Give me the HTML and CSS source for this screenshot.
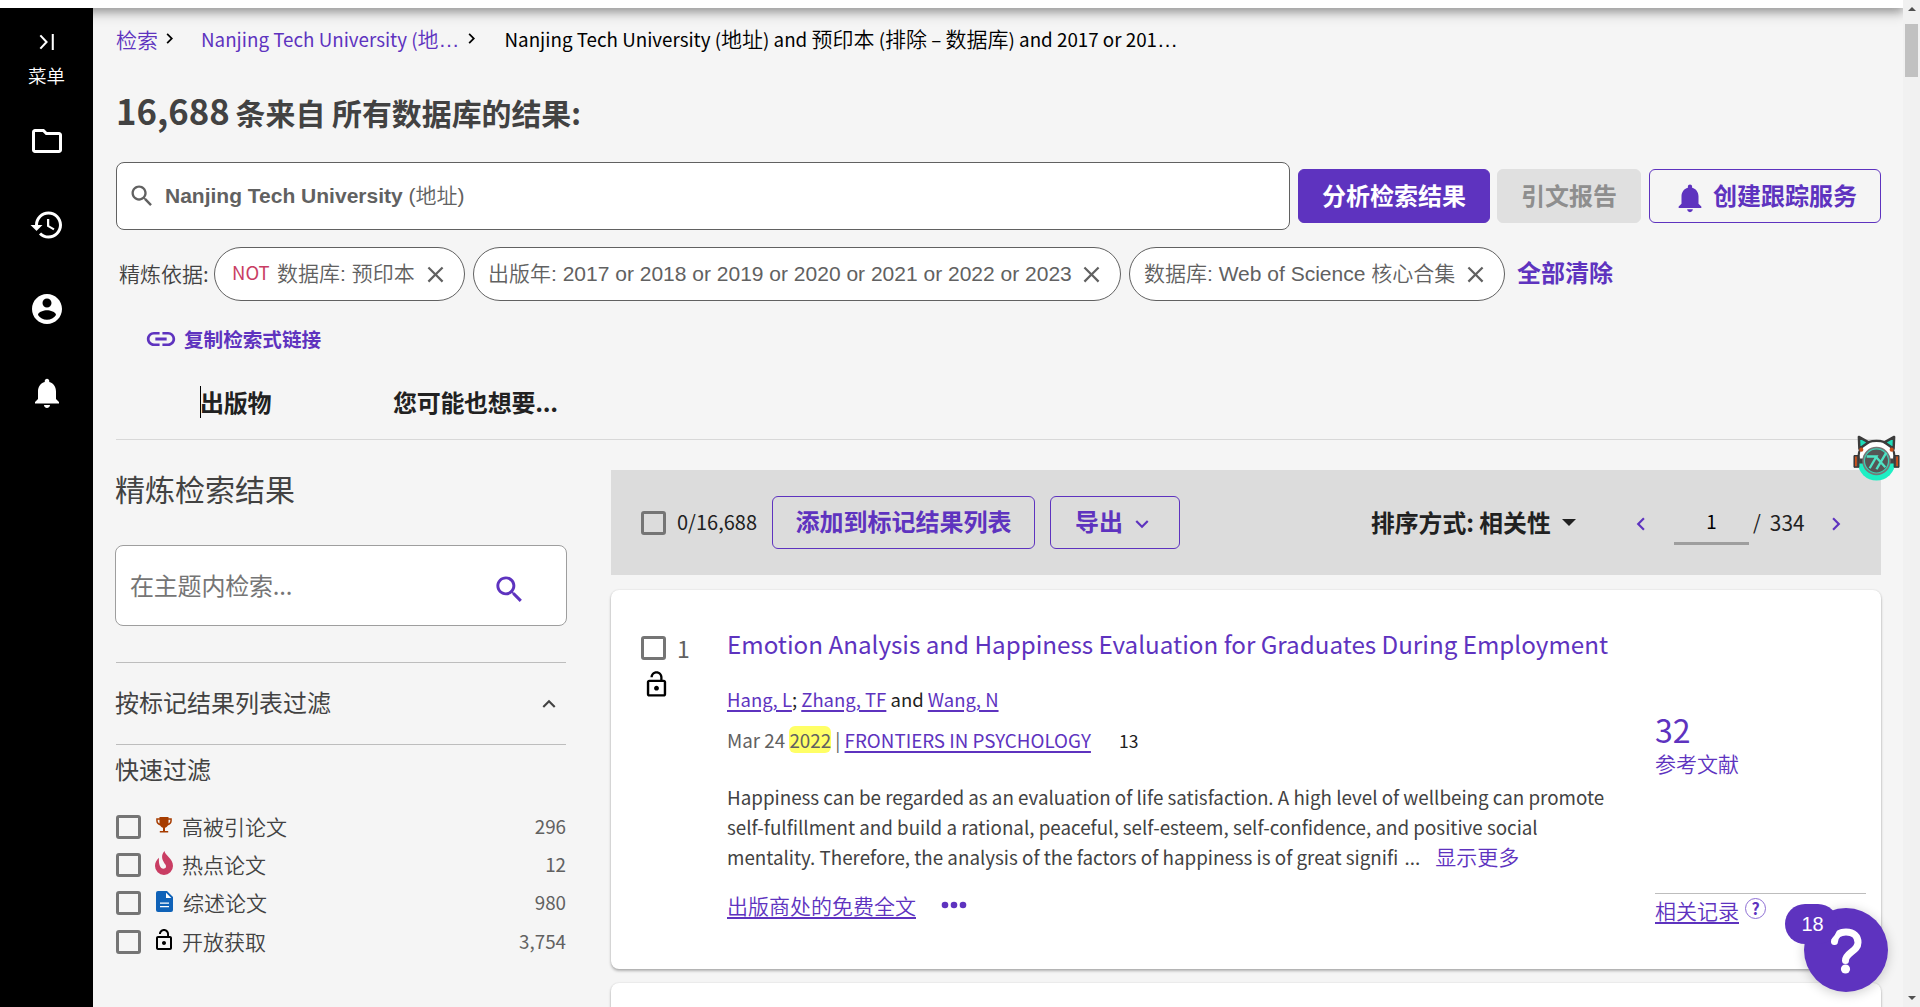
FILE: index.html
```html
<!DOCTYPE html>
<html lang="zh-CN">
<head>
<meta charset="utf-8">
<title>Web of Science</title>
<link rel="stylesheet" href="styles.css">
</head>
<body>
<svg width="0" height="0" class="defs">
  <symbol id="bell" viewBox="0 0 24 24"><path d="M12 22c1.1 0 2-.9 2-2h-4c0 1.1.89 2 2 2zm6-6v-5c0-3.07-1.64-5.64-4.5-6.32V4c0-.83-.67-1.5-1.5-1.5s-1.500.67-1.500 1.500v.68C7.630 5.360 6 7.920 6 11v5l-2 2v1h16v-1l-2-2z"/></symbol>
  <symbol id="search" viewBox="0 0 24 24"><path d="M15.500 14h-.79l-.28-.27C15.410 12.590 16 11.110 16 9.500 16 5.910 13.090 3 9.500 3S3 5.910 3 9.500 5.910 16 9.500 16c1.610 0 3.090-.59 4.230-1.570l.27.28v.79l5 4.990L20.490 19l-4.990-5zm-6 0C7.010 14 5 11.990 5 9.500S7.010 5 9.500 5 14 7.010 14 9.500 11.990 14 9.500 14z"/></symbol>
  <symbol id="close" viewBox="0 0 24 24"><path d="M19 6.410L17.590 5 12 10.590 6.410 5 5 6.410 10.590 12 5 17.590 6.410 19 12 13.410 17.590 19 19 17.590 13.410 12z"/></symbol>
  <symbol id="right" viewBox="0 0 24 24"><path d="M10 6L8.590 7.410 13.170 12l-4.580 4.590L10 18l6-6z"/></symbol>
  <symbol id="left" viewBox="0 0 24 24"><path d="M15.410 7.410L14 6l-6 6 6 6 1.410-1.410L10.830 12z"/></symbol>
  <symbol id="up" viewBox="0 0 24 24"><path d="M12 8l-6 6 1.410 1.410L12 10.830l4.590 4.580L18 14z"/></symbol>
  <symbol id="down" viewBox="0 0 24 24"><path d="M16.590 8.590L12 13.170 7.410 8.590 6 10l6 6 6-6z"/></symbol>
  <symbol id="unlock" viewBox="0 0 24 24"><path d="M12 17c1.100 0 2-.9 2-2s-.9-2-2-2-2 .9-2 2 .9 2 2 2zm6-9h-1V6c0-2.760-2.240-5-5-5S7 3.240 7 6h1.900c0-1.710 1.390-3.100 3.100-3.100s3.100 1.390 3.100 3.100v2H6c-1.100 0-2 .9-2 2v10c0 1.100.9 2 2 2h12c1.100 0 2-.9 2-2V10c0-1.100-.9-2-2-2zm0 12H6V10h12v10z"/></symbol>
</svg>
<div class="app">
  <div class="topbar"></div>
  <nav class="rail">
    <svg class="expand" viewBox="0 0 18 18"><path d="M1.500 1.500l7 7.500-7 7.500M15.500 0v18" fill="none" stroke="#fff" stroke-width="2.300"/></svg>
    <span class="rail-label">菜单</span>
    <svg class="r1" viewBox="0 0 24 24"><path d="M9.170 6l2 2H20v10H4V6h5.170M10 4H4c-1.100 0-1.990.9-1.990 2L2 18c0 1.100.9 2 2 2h16c1.100 0 2-.9 2-2V8c0-1.100-.9-2-2-2h-8l-2-2z"/></svg>
    <svg class="r2" viewBox="0 0 24 24"><path d="M13 3c-4.970 0-9 4.030-9 9H1l3.890 3.890.07.14L9 12H6c0-3.870 3.130-7 7-7s7 3.130 7 7-3.130 7-7 7c-1.930 0-3.680-.79-4.940-2.060l-1.420 1.420C8.270 19.990 10.510 21 13 21c4.970 0 9-4.030 9-9s-4.030-9-9-9zm-1 5v5l4.280 2.540.72-1.210-3.500-2.080V8H12z"/></svg>
    <svg class="r3" viewBox="0 0 24 24"><path d="M12 2C6.480 2 2 6.480 2 12s4.480 10 10 10 10-4.480 10-10S17.520 2 12 2zm0 3c1.660 0 3 1.340 3 3s-1.340 3-3 3-3-1.340-3-3 1.340-3 3-3zm0 14.200c-2.500 0-4.710-1.280-6-3.220.03-1.990 4-3.080 6-3.080 1.990 0 5.970 1.090 6 3.080-1.290 1.940-3.500 3.220-6 3.220z"/></svg>
    <svg class="r4"><use href="#bell"/></svg>
  </nav>
  <main class="main">
    <div class="crumbs">
      <a class="c1 zh">检索</a><svg class="sep"><use href="#right"/></svg>
      <a class="c2">Nanjing Tech University (<span class="zh">地</span><span class="more">…</span></a><svg class="sep"><use href="#right"/></svg>
      <span class="c3">Nanjing Tech University (<span class="zh">地址</span>) and <span class="zh">预印本</span> (<span class="zh">排除</span> – <span class="zh">数据库</span>) and 2017 or 201<span class="more">…</span></span>
    </div>
    <h1 class="total"><span class="num">16,688</span><span class="total-text">条来自 所有数据库的结果:</span></h1>
    <div class="searchrow">
      <div class="query"><svg><use href="#search"/></svg><span><b>Nanjing Tech University</b> (地址)</span></div>
      <button class="btn solid">分析检索结果</button>
      <button class="btn disabled">引文报告</button>
      <button class="btn alert"><svg><use href="#bell"/></svg>创建跟踪服务</button>
    </div>
    <div class="refine">
      <span class="refine-label">精炼依据:</span>
      <span class="chip chip1"><em>NOT</em>数据库: 预印本<svg><use href="#close"/></svg></span>
      <span class="chip chip2">出版年: 2017 or 2018 or 2019 or 2020 or 2021 or 2022 or 2023<svg><use href="#close"/></svg></span>
      <span class="chip chip3">数据库: Web of Science 核心合集<svg><use href="#close"/></svg></span>
      <a class="clear">全部清除</a>
    </div>
    <div class="copy"><svg viewBox="0 0 24 24"><path d="M3.900 12c0-1.710 1.390-3.100 3.100-3.100h4V7H7c-2.760 0-5 2.240-5 5s2.240 5 5 5h4v-1.900H7c-1.710 0-3.100-1.390-3.100-3.100zM8 13h8v-2H8v2zm9-6h-4v1.900h4c1.710 0 3.100 1.390 3.100 3.100s-1.390 3.100-3.100 3.100h-4V17h4c2.760 0 5-2.240 5-5s-2.240-5-5-5z"/></svg><span>复制检索式链接</span></div>
    <div class="tabs"><span class="tab1">出版物</span><span class="tab2">您可能也想要...</span></div>
    <div class="columns">
      <aside class="side">
        <h2>精炼检索结果</h2>
        <div class="topic"><span>在主题内检索...</span><svg><use href="#search"/></svg></div>
        <div class="section"><span>按标记结果列表过滤</span><svg><use href="#up"/></svg></div>
        <h3>快速过滤</h3>
        <div class="filter"><i class="box"></i><svg class="trophy" viewBox="0 0 18 18"><path d="M4.500 1h9v1.200h3.300v2.600c0 2.500-1.600 4.200-3.900 4.600-.8 1.300-1.700 2-2.900 2.300v3.200h3.200v1.600H4.800v-1.600H8v-3.200c-1.200-.3-2.100-1-2.900-2.300C2.800 9 1.200 7.300 1.200 4.800V2.200h3.300zM2.700 3.700v1c0 1.200.6 2.200 1.800 2.800V3.700zm10.800 0v3.800c1.200-.6 1.800-1.600 1.800-2.800v-1z"/></svg><span>高被引论文</span><b>296</b></div>
        <div class="filter"><i class="box"></i><svg class="flame" viewBox="0 0 18 24"><path d="M9.500 0c.2 4.500 8.500 7 8.500 15a9 9 0 0 1-18 0c0-3.500 1.500-6 4-8.300-.3 3.300 0 6 .8 8 .8 2 2 3 3.700 3 2.300 0 3.200-2 1.900-4.200C8.500 11 4.500 5.500 9.500 0z"/></svg><span>热点论文</span><b>12</b></div>
        <div class="filter"><i class="box"></i><svg class="doc" viewBox="0 0 17 21"><path fill="#0f62b8" d="M2 0h9l6 6v13a2 2 0 0 1-2 2H2a2 2 0 0 1-2-2V2a2 2 0 0 1 2-2z"/><path fill="#fff" d="M10 1.700V7h5.300zM4 11.500h9v1.300H4zm0 3.500h9v1.300H4z"/></svg><span>综述论文</span><b>980</b></div>
        <div class="filter"><i class="box"></i><svg class="open"><use href="#unlock"/></svg><span>开放获取</span><b>3,754</b></div>
      </aside>
      <section class="results">
        <div class="toolbar">
          <i class="box"></i><span class="count">0/16,688</span>
          <button class="btn add">添加到标记结果列表</button>
          <button class="btn export">导出<svg><use href="#down"/></svg></button>
          <span class="sort">排序方式: 相关性</span><i class="caret"></i>
          <svg class="prev"><use href="#left"/></svg>
          <span class="page">1</span><span class="slash">/</span><span class="pages">334</span>
          <svg class="next"><use href="#right"/></svg>
        </div>
        <article class="card">
          <div class="pick">
            <div class="pickrow"><i class="box"></i><span>1</span></div>
            <svg><use href="#unlock"/></svg>
          </div>
          <div class="record">
            <a class="title">Emotion Analysis and Happiness Evaluation for Graduates During Employment</a>
            <div class="authors"><a>Hang, L</a>; <a>Zhang, TF</a> and <a>Wang, N</a></div>
            <div class="source">Mar 24 <mark>2022</mark> | <a>FRONTIERS IN PSYCHOLOGY</a><span class="issue">13</span></div>
            <p class="abstract">Happiness can be regarded as an evaluation of life satisfaction. A high level of wellbeing can promote<br>self-fulfillment and build a rational, peaceful, self-esteem, self-confidence, and positive social<br>mentality. Therefore, the analysis of the factors of happiness is of great signifi <span class="dots">...</span><a>显示更多</a></p>
            <div class="links"><a>出版商处的免费全文</a><svg viewBox="0 0 26 8"><circle cx="4" cy="4" r="3.300"/><circle cx="13" cy="4" r="3.300"/><circle cx="22" cy="4" r="3.300"/></svg></div>
          </div>
          <div class="stats">
            <span class="refs">32</span>
            <a class="refs-label">参考文献</a>
            <div class="related"><a>相关记录</a><span class="hint">?</span></div>
          </div>
        </article>
        <article class="card next-card"></article>
      </section>
    </div>
  </main>
  <div class="scrollbar"><i class="arrow-up"></i><i class="thumb"></i><i class="arrow-down"></i></div>
</div>
<svg class="cat" viewBox="0 0 48 48">
  <ellipse cx="24" cy="29" rx="19" ry="18.500" fill="#1eefc4"/>
  <path d="M6 27C4 14 12 7 24 7s20 7 18 20z" fill="#fff" stroke="#3c3c3c" stroke-width="2.200"/>
  <path d="M6.500 15L6 3 16 8.500zM41.500 15L42 3 32 8.500z" fill="#1edcb8" stroke="#3c3c3c" stroke-width="2.500" stroke-linejoin="round"/>
  <path d="M1 22h5v12H1zM42 22h5v12h-5z" fill="#444" stroke="#333" stroke-width="1"/>
  <path d="M3 23v10M45 23v10" stroke="#d4521c" stroke-width="1.800"/>
  <circle cx="8.500" cy="16" r="2.100" fill="#c84c18"/><circle cx="39.500" cy="16" r="2.100" fill="#c84c18"/>
  <path d="M6 25h5v5H6zM37 25h5v5h-5z" fill="#444"/>
  <circle cx="24" cy="27.500" r="14.500" fill="#777"/>
  <circle cx="24" cy="27.500" r="12.300" fill="#555" stroke="#3ecfb3" stroke-width="1.200"/>
  <path d="M14 23h10L17 35M24 24l9 10M34 19L24 36" fill="none" stroke="#4fe3c5" stroke-width="2.400"/>
</svg>
<div class="help">
  <svg viewBox="0 0 84 84"><path d="M30.500 33.500C31 27 35.500 24 42 24c8 0 12 4.500 12 10.500 0 9-12.500 10-12.500 18" fill="none" stroke="#fff" stroke-width="7" stroke-linecap="round"/><circle cx="41.500" cy="61" r="4.600" fill="#fff"/></svg>
  <span class="badge">18</span>
</div>
</body>
</html>
```
FILE: styles.css
```css
* { box-sizing: border-box; }
html, body { margin: 0; height: 1007px; overflow: hidden; }
body {
  background: #f5f5f5;
  color: #424242;
  font-family: "Noto Sans CJK SC", sans-serif;
  font-size: 20px;
  line-height: 30px;
}
h1, h2, h3, p { margin: 0; }
a, span { white-space: nowrap; }
a { color: #5e33bf; }
em, i { font-style: normal; }
svg { flex: none; fill: currentColor; display: block; }
.defs { position: absolute; }
button { font-family: inherit; margin: 0; }

.app {
  display: grid;
  grid-template-rows: 8px 999px;
  grid-template-columns: 93px 1fr 17px;
}
.topbar {
  grid-column: 1 / 3;
  background: #fff;
  box-shadow: 0 3px 14px 2px rgba(0,0,0,.22), 0 2px 10px rgba(0,0,0,.35);
  clip-path: inset(0 0 -40px 0);
  position: relative;
}
.rail {
  grid-row: 2; grid-column: 1;
  background: #000; color: #fff;
  position: relative;
  display: flex; flex-direction: column; align-items: center;
}
.expand { width: 18px; height: 16px; margin-top: 26px; }
.rail-label { font-size: 18.500px; line-height: 30px; margin-top: 10px; font-weight: 350; }
.r1, .r2, .r3, .r4 { width: 36px; height: 36px; }
.r1 { margin-top: 33px; }
.r2, .r3, .r4 { margin-top: 48px; }

.main { grid-row: 2; grid-column: 2; padding: 0 22px 0 23px; min-width: 0; overflow: hidden; }
.crumbs { height: 61px; display: flex; align-items: center; color: #000; font-size: 18.800px; }
.zh { font-size: 21px; font-weight: 350; }
.more { font-family: "Liberation Sans", sans-serif; font-size: 21px; }
.sep { width: 21px; height: 21px; margin-left: 1px; }
.c2 { margin-left: 21px; }
.c3 { margin-left: 23px; }

.total { height: 66px; margin-top: 9px; display: flex; align-items: center; font-size: 29.900px; }
.num { font-size: 34.700px; margin-right: 6px; margin-top: -2px; }
.total-text { padding-top: 1px; }

.searchrow { height: 68px; margin-top: 18px; display: flex; align-items: center; }
.query {
  width: 1174px; height: 68px; margin-right: 8px; padding-left: 11px;
  background: #fff; border: 1px solid #616161; border-radius: 8px;
  display: flex; align-items: center;
  font-family: "Liberation Sans", "Noto Sans CJK SC", sans-serif; font-size: 21px; font-weight: 350; color: #616161;
}
.query svg { width: 28px; height: 28px; margin-right: 9px; }
.btn {
  font-weight: 700; font-size: 24px; line-height: 30px; color: #5e33bf;
  border: 1px solid #5e33bf; border-radius: 6px; background: none; padding: 0 0 2px;
  height: 54px; display: flex; align-items: center; justify-content: center;
}
.solid { width: 192px; background: #5e33bf; color: #fff; }
.disabled { width: 144px; margin: 0 8px 0 7px; background: #e0e0e0; border-color: #e0e0e0; color: #8e8e8e; }
.alert { width: 232px; }
.alert svg { width: 34px; height: 34px; margin: 6px 6px 0 0; }

.refine { display: flex; align-items: center; height: 54px; margin-top: 17px; font-size: 21px; color: #616161; }
.refine-label { width: 98px; padding: 0 0 2px 3px; color: #424242; font-weight: 350; }
.chip {
  height: 54px; border: 1px solid #616161; border-radius: 27px; background: #fff;
  display: flex; align-items: center; justify-content: space-between;
  padding: 0 15px 0 14px; margin-right: 8px;
  font-family: "Liberation Sans", "Noto Sans CJK SC", sans-serif; font-weight: 350;
}
.chip svg { width: 27px; height: 27px; }
.chip em { color: #c93d63; font-size: 18.500px; font-weight: 400; font-family: "Noto Sans CJK SC", sans-serif; padding-bottom: 4px; }
.chip1 { width: 251px; padding-left: 17px; }
.chip2 { width: 648px; }
.chip3 { width: 376px; margin-right: 12px; }
.clear { font-size: 24px; font-weight: 700; padding-bottom: 4px; }

.copy { display: flex; align-items: center; height: 40px; margin: 18px 0 0 28px; color: #5e33bf; font-weight: 700; font-size: 19.600px; }
.copy svg { width: 34px; height: 34px; margin-right: 6px; }
.copy span { padding-bottom: 1px; }

.tabs { height: 81px; border-bottom: 1px solid #d8d8d8; display: flex; align-items: flex-start; font-size: 24px; font-weight: 700; color: #212121; padding: 27px 0 0 84px; }
.tabs span { line-height: 32px; letter-spacing: -.3px; }
.tab1 { width: 193px; border-left: 1px solid #000; text-indent: -1px; }

.columns { display: flex; justify-content: space-between; }
.side { width: 452px; margin-left: -1px; padding-top: 28px; }
.side h2 { font-size: 30px; line-height: 40px; font-weight: 400; }
.topic {
  height: 81px; margin-top: 37px; padding: 0 39px 0 14px; border: 1px solid #9e9e9e; border-radius: 8px; background: #fff;
  display: flex; align-items: center; justify-content: space-between; font-size: 24px; color: #757575;
}
.topic span { padding-bottom: 2px; letter-spacing: -.2px; }
.topic svg { width: 35px; height: 35px; color: #5e33bf; margin-top: 7px; }
.section {
  margin: 36px 1px 0 1px; height: 83px; border: 1px solid #bdbdbd; border-width: 1px 0;
  display: flex; align-items: center; justify-content: space-between; padding-right: 4px; font-size: 24px;
}
.section span { padding-bottom: 3px; margin-left: -1px; }
.section svg { width: 26px; height: 26px; }
.side h3 { font-size: 24px; line-height: 48px; font-weight: 400; margin: 0 0 15px; }
.filter { display: flex; align-items: center; height: 38.200px; margin: 0 1px; font-size: 21px; font-weight: 350; }
.filter svg { margin-right: 9px; margin-bottom: 4px; }
.filter span, .filter b { padding-bottom: 2px; }
.filter b { margin-left: auto; font-weight: 400; font-size: 18.800px; color: #616161; }
.box { flex: none; width: 25px; height: 24px; border: 3px solid #757575; border-radius: 3px; }
.trophy { width: 18px; height: 18px; color: #a63c00; margin-left: 14px; }
.flame { width: 18px; height: 24px; color: #c93d63; margin-left: 14px; }
.doc { width: 17px; height: 21px; margin-left: 15px; }
.filter .doc { margin-right: 10px; }
.open { width: 24px; height: 24px; color: #000; margin-left: 11px; }
.filter .open { margin-right: 6px; }

.results { width: 1270px; padding-top: 30px; }
.toolbar { height: 105px; background: #dcdcdc; display: flex; align-items: center; padding-left: 30px; color: #212121; }
.toolbar > span { padding-bottom: 2px; }
.toolbar .btn { height: 53px; padding-bottom: 3px; }
.count { width: 94px; padding-left: 11px; margin-right: 12px; }
.add { width: 263px; margin-right: 15px; }
.export { width: 130px; }
.export svg { width: 26px; height: 26px; margin: 6px 0 0 6px; }
.sort { margin-left: 191px; font-size: 23.800px; font-weight: 700; width: 191px; }
.caret { border: 7px solid transparent; border-top-color: #212121; border-bottom: 0; }
.prev, .next { width: 26px; height: 26px; color: #5e33bf; margin-top: 2px; }
.prev { margin-left: 52px; margin-right: 20px; }
.page { width: 75px; height: 44px; margin-top: 1px; text-align: center; color: #000; border-bottom: 3px solid #9e9e9e; line-height: 40px; font-size: 18.800px; }
.slash { margin: 0 9px 0 4px; }
.pages { width: 53px; font-size: 20.800px; }

.card { height: 379px; margin-top: 15px; background: #fff; border-radius: 8px; box-shadow: 0 2px 3px rgba(0,0,0,.28), 0 0 2px rgba(0,0,0,.12); display: flex; padding-left: 30px; }
.next-card { margin-top: 14px; }
.pick { width: 87px; padding-top: 45px; }
.pickrow { display: flex; align-items: center; gap: 11px; height: 26px; font-size: 23px; color: #616161; }
.pick svg { width: 29px; height: 29px; color: #000; margin: 9px 0 0 1px; }
.record { width: 927px; font-size: 18.800px; }
.title { display: block; font-size: 24.200px; line-height: 36px; margin-top: 36px; margin-left: -1px; }
.authors { margin-top: 22px; color: #212121; font-size: 18.500px; margin-left: -1px; }
.authors a, .source a, .links a, .related a { text-decoration: underline; text-underline-offset: 3px; text-decoration-thickness: 2px; }
.source { margin-top: 11px; color: #616161; margin-left: -1px; }
.source mark { background: #ffff66; color: inherit; border-radius: 6px; }
.issue { color: #212121; margin-left: 28px; font-size: 17.500px; }
.abstract { margin-top: 26px; margin-left: -1px; white-space: nowrap; }
.dots { margin: 0 15px 0 2px; }
.abstract a { font-size: 21px; font-weight: 350; line-height: 20px; }
.links { display: flex; align-items: center; margin-top: 18px; margin-left: -1px; font-size: 21px; font-weight: 350; }
.links svg { width: 26px; height: 8px; margin-left: 25px; color: #5e33bf; }
.stats { width: 211px; padding-top: 119px; }
.refs, .refs-label { display: block; color: #5e33bf; }
.refs { font-size: 32px; line-height: 40px; }
.refs-label { font-size: 21px; font-weight: 350; line-height: 28px; }
.related { margin-top: 116px; border-top: 1px solid #bdbdbd; display: flex; align-items: center; height: 32px; font-size: 21px; font-weight: 350; }
.hint { width: 21px; height: 21px; border: 1px solid #8e6fd4; border-radius: 50%; margin: -3px 0 0 6px; color: #5e33bf; font-size: 16px; font-weight: 700; line-height: 18px; text-align: center; }

.scrollbar { grid-row: 1 / 3; grid-column: 3; background: #f1f1f1; display: flex; flex-direction: column; align-items: center; }
.scrollbar i { flex: none; }
.arrow-up { border: 4px solid transparent; border-bottom-color: #505050; border-top: 0; margin: 7px 0 13px; }
.thumb { width: 13px; height: 53px; background: #c1c1c1; }
.arrow-down { border: 4px solid transparent; border-top-color: #505050; border-bottom: 0; margin: auto 0 7px; }

.cat { position: absolute; left: 1853px; top: 434px; width: 47px; height: 47px; }
.help { position: absolute; left: 1804px; top: 908px; width: 84px; height: 84px; border-radius: 50%; background: #5e33bf; box-shadow: 0 2px 12px rgba(0,0,0,.2); }
.help svg { width: 84px; height: 84px; }
.badge { position: absolute; left: -19px; top: -4px; width: 53px; height: 40px; border-radius: 20px; background: #5e33bf; color: #fff; text-align: center; font: 20px/41px "Liberation Sans", sans-serif; text-indent: 2px; }
```
